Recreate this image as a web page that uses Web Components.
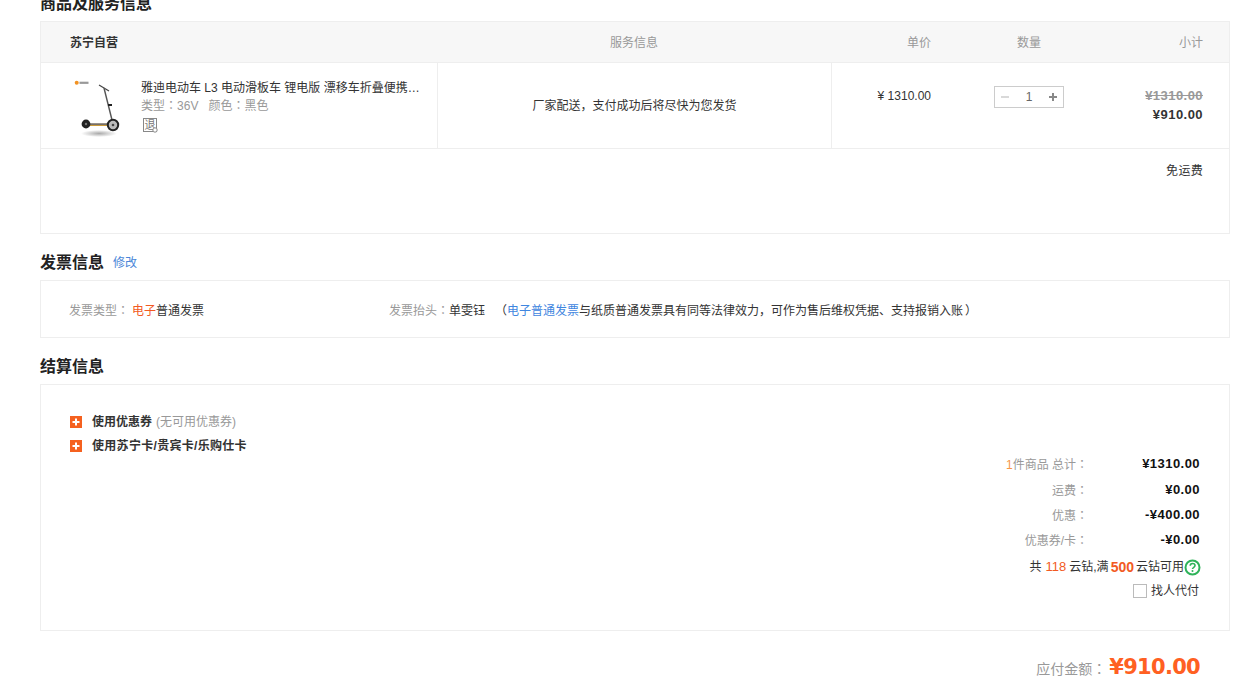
<!DOCTYPE html>
<html lang="zh-CN">
<head>
<meta charset="utf-8">
<title>结算</title>
<style>
html,body{margin:0;padding:0;height:682px;overflow:hidden;background:#fff}
body{font:12px/18px "Liberation Sans","Noto Sans CJK SC",sans-serif;color:#333}
</style>
</head>
<body>
<checkout-page>
  <sec-heading>商品及服务信息</sec-heading>
  <goods-panel></goods-panel>
  <sec-heading>发票信息<a slot="action">修改</a></sec-heading>
  <invoice-panel></invoice-panel>
  <sec-heading>结算信息</sec-heading>
  <settle-panel></settle-panel>
  <pay-total></pay-total>
</checkout-page>
<script>
function el(name, css, html){
  var marked = html.replace(/：/g, function(m){return '<span class="tc" lang="zh-Hant">'+m+'</span>';});
  customElements.define(name, class extends HTMLElement{
    constructor(){super();this.attachShadow({mode:'open'}).innerHTML='<style>.tc{font-family:"Noto Sans CJK TC",sans-serif}'+css+'</style>'+marked;}
  });
}
el('checkout-page',`:host{display:flex;flex-direction:column;width:1190px;margin:-9px 0 0 40px}`,`<slot></slot>`);
el('sec-heading',`:host{display:flex;align-items:center;height:26px;font-size:16px;font-weight:700;color:#222}
  ::slotted(a){font-size:12px;font-weight:400;color:#4a86d8;margin-left:9px}`,`<slot></slot><slot name="action"></slot>`);
el('goods-panel',`:host{display:block;border:1px solid #eee;height:211px;margin:4px 0 16px;font-size:12px}
  .g{display:grid;grid-template-columns:397px 394px 99px 196px 102px}
  .h{box-sizing:content-box;height:39px;padding-top:1px;background:#f7f7f7;border-bottom:1px solid #eee;align-items:center;color:#999}
  .h b{color:#333;padding-left:29px;font-weight:700}
  .c{text-align:center}.r{text-align:right}.c2{text-align:center;padding-right:2px}
  .h .s{padding-right:26px}
  .b{height:85px;grid-template-rows:85px;border-bottom:1px solid #eee}
  .b>div{box-sizing:border-box}
  .p{display:flex;border-right:1px solid #eee;padding:14px 0 0 30px}
  .p svg.img{width:60px;height:60px;flex:none;margin-right:10px}
  .t{width:280px;padding-top:2px}
  .n{white-space:nowrap;overflow:hidden;text-overflow:ellipsis;line-height:18px;color:#333}
  .m{color:#999;line-height:16px}
  .m span.g2{margin-left:10px}
  .ret{position:relative;display:block;box-sizing:border-box;width:14px;height:14px;margin:4px 0 0 2px;border:1px solid #888;color:#777;font-size:11px;line-height:12px;text-align:center}
  .ret svg{position:absolute;right:-2px;bottom:-2px}
  .sv{border-right:1px solid #eee;text-align:center;line-height:86px}
  .pr{text-align:right;padding-top:24px;color:#333}
  .q{display:flex;justify-content:center;padding-top:23px}
  .s2{text-align:right;padding:23px 26px 0 0;font-weight:700;font-size:13px;line-height:19px;letter-spacing:.45px}
  .s2 del{display:block;color:#999}
  .f{text-align:right;padding:13px 26px 0 0;color:#333;letter-spacing:.3px}`,
  `<div class="g h"><b>苏宁自营</b><span class="c2">服务信息</span><span class="r">单价</span><span class="c">数量</span><span class="r s">小计</span></div>
  <div class="g b">
    <div class="p">
      <svg class="img" viewBox="0 0 60 60" aria-hidden="true">
        <defs><radialGradient id="sh"><stop offset="0" stop-color="#aaa"/><stop offset="1" stop-color="#fff"/></radialGradient></defs>
        <circle cx="5.700" cy="5.700" r="2" fill="#f29222"/><rect x="8.500" y="4.700" width="9" height="2.200" fill="#999"/>
        <ellipse cx="28" cy="56.500" rx="18" ry="3.500" fill="url(#sh)"/>
        <path d="M28 8l10 6" stroke="#444" stroke-width="1.200" fill="none"/>
        <path d="M33 11l9 36" stroke="#555" stroke-width="1.400" fill="none"/>
        <path d="M37 28h4" stroke="#222" stroke-width="2"/>
        <path d="M17 47.500h19l5-1" stroke="#777068" stroke-width="2.400" fill="none"/>
        <path d="M19 48.500h17" stroke="#c99a3a" stroke-width="1"/>
        <circle cx="15" cy="47" r="4.400" fill="#222"/><circle cx="15" cy="47" r="1.200" fill="#777"/>
        <circle cx="42" cy="48" r="5.200" fill="#bbb" stroke="#222" stroke-width="2"/><circle cx="42" cy="48" r="1.300" fill="#444"/>
      </svg>
      <div class="t">
        <div class="n">雅迪电动车 L3 电动滑板车 锂电版 漂移车折叠便携式代步神器</div>
        <div class="m">类型：36V<span class="g2">颜色：黑色</span></div>
        <span class="ret">退<svg width="6" height="6" viewBox="0 0 6 6" aria-hidden="true"><circle cx="3" cy="3" r="2.200" fill="#fff" stroke="#888"/></svg></span>
      </div>
    </div>
    <div class="sv">厂家配送，支付成功后将尽快为您发货</div>
    <div class="pr">¥ 1310.00</div>
    <div class="q"><qty-box></qty-box></div>
    <div class="s2"><del>¥1310.00</del>¥910.00</div>
  </div>
  <div class="f">免运费</div>`);
el('qty-box',`:host{display:flex;box-sizing:border-box;width:70px;height:22px;border:1px solid #ccc;align-items:center;justify-content:space-between;padding:0 6px}
  svg{display:block}span{color:#666}`,
  `<svg width="8" height="8" viewBox="0 0 8 8" aria-hidden="true"><path d="M0 4h8" stroke="#ccc" stroke-width="1.500"/></svg><span>1</span><svg width="8" height="8" viewBox="0 0 8 8" aria-hidden="true"><path d="M0 4h8M4 0v8" stroke="#888" stroke-width="2"/></svg>`);
el('invoice-panel',`:host{display:flex;box-sizing:border-box;border:1px solid #eee;height:58px;margin:4px 0 16px;align-items:center;padding:2px 0 0 28px;color:#333}
  i{font-style:normal;color:#999}.o{color:#f25a23}.b{color:#3f86e0}
  .a{width:320px}.x{margin-left:10px}.k{margin-left:3px}.e{margin-left:2px}`,
  `<span class="a"><i>发票类型：</i><span class="o k">电子</span>普通发票</span><span><i>发票抬头：</i>单雯钰<span class="x">（</span><span class="b">电子普通发票</span>与纸质普通发票具有同等法律效力，可作为售后维权凭据、支持报销入账<span class="e">）</span></span>`);
el('settle-panel',`:host{display:block;box-sizing:border-box;border:1px solid #eee;height:247px;margin:4px 0 0;padding:25px 29px 0}
  .u{display:flex;align-items:center;height:24px;font-weight:700;color:#333}
  .u svg{margin-right:10px;flex:none}.u i{font-style:normal;font-weight:400;color:#999;margin-left:4px}
  .w{letter-spacing:.3px}
  .s{display:flex;flex-direction:column;align-items:flex-end;margin-top:-6px}
  .r{display:flex;height:25px;align-items:center;color:#999}
  .r.first{margin-bottom:1px}
  .r b{width:112px;text-align:right;color:#111;font-size:13px;letter-spacing:.45px;margin-bottom:1px}
  .o{color:#f79646}
  .y{display:flex;align-items:center;height:26px;margin-top:1px;color:#333}
  .y em{font-style:normal;font-size:13px;color:#f25a23;margin:0 3px 0 4px}.y strong{color:#f25a23;font-size:14px;margin:0 2px 0 2px}
  .y svg{margin-left:0;margin-right:-1px}
  .c{display:flex;align-items:center;height:24px;margin-top:-1px;padding-right:1px;color:#333}
  .c span{box-sizing:border-box;width:14px;height:14px;border:1px solid #bbb;margin-right:4px}`,
  `<div class="u"><svg width="12" height="12" viewBox="0 0 12 12" aria-hidden="true"><rect width="12" height="12" fill="#f5611f"/><path d="M6 2.500v7M2.500 6h7" stroke="#fff" stroke-width="2"/></svg>使用优惠券<i>(无可用优惠券)</i></div>
  <div class="u"><svg width="12" height="12" viewBox="0 0 12 12" aria-hidden="true"><rect width="12" height="12" fill="#f5611f"/><path d="M6 2.500v7M2.500 6h7" stroke="#fff" stroke-width="2"/></svg><span class="w">使用苏宁卡/贵宾卡/乐购仕卡</span></div>
  <div class="s">
    <div class="r first"><span><span class="o">1</span>件商品 总计：</span><b>¥1310.00</b></div>
    <div class="r"><span>运费：</span><b>¥0.00</b></div>
    <div class="r"><span>优惠：</span><b>-¥400.00</b></div>
    <div class="r"><span>优惠券/卡：</span><b>-¥0.00</b></div>
    <div class="y">共<em>118</em>云钻,满<strong>500</strong>云钻可用<svg width="17" height="17" viewBox="0 0 17 17" aria-hidden="true"><circle cx="8.500" cy="8.500" r="7" fill="none" stroke="#2fb35a" stroke-width="2"/><path d="M6.200 6.700c0-3 4.800-3 4.800-.1 0 1.700-2.500 1.700-2.500 3.500" fill="none" stroke="#2fb35a" stroke-width="1.600"/><circle cx="8.500" cy="12" r="1" fill="#2fb35a"/></svg></div>
    <div class="c"><span></span>找人代付</div>
  </div>`);
el('pay-total',`:host{display:block;text-align:right;padding:19px 30px 0 0;font-size:14px;line-height:34px;color:#999}
  b{font:700 21px/34px "DejaVu Sans",sans-serif;letter-spacing:-.7px;color:#ff6022;margin-left:3px}`,
  `应付金额：<b>¥910.00</b>`);
</script>
</body>
</html>
